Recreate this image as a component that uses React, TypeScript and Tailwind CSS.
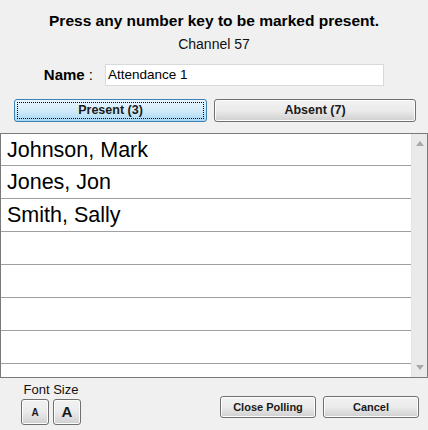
import React from 'react'

const names = ['Johnson, Mark', 'Jones, Jon', 'Smith, Sally', '', '', '', '', '']

const grayBtn =
  'rounded-[3px] border border-[#707070] bg-gradient-to-b from-[#f2f2f2] via-[#ebebeb] to-[#cfcfcf] shadow-[inset_0_0_0_1px_#fcfcfc] text-[#1a1a1a] font-bold'

export default function App() {
  return (
    <div
      className="w-[428px] h-[430px] bg-[#f0f0f0] flex flex-col overflow-hidden text-black"
      style={{ fontFamily: '"Liberation Sans", Arial, sans-serif' }}
    >
      <div className="mt-[12px] text-center text-[15.5px] font-bold leading-[18px]">
        Press any number key to be marked present.
      </div>
      <div className="mt-[6px] text-center text-[14px] leading-[16px] text-[#111]">Channel 57</div>

      {/* name row */}
      <div className="mt-[12px] flex items-center h-[22px]">
        <div className="w-[94px] pr-[1px] text-right text-[15px] font-bold">
          Name <span className="font-normal">:</span>
        </div>
        <div className="ml-[11px] w-[279px] h-[22px] bg-white border border-[#d9d9d9] flex items-center px-[2px] text-[13.5px]">
          Attendance 1
        </div>
      </div>

      {/* tabs */}
      <div className="mt-[13px] flex h-[23px] pl-[14px] gap-[7px]">
        <button className="w-[193px] h-full rounded-[3px] border border-[#3c7fb1] bg-gradient-to-b from-[#eaf6fd] via-[#d2ebf9] to-[#a7d9f5] p-[2px] text-[12.5px] font-bold text-[#1a1a1a]">
          <div className="w-full h-full border border-dotted border-black flex items-center justify-center">
            Present (3)
          </div>
        </button>
        <button className={`${grayBtn} w-[202px] h-full text-[12.5px] flex items-center justify-center`}>
          Absent (7)
        </button>
      </div>

      {/* list */}
      <div className="mt-[11px] h-[245px] w-[428px] border border-[#7a7a7a] bg-white flex">
        <div className="flex-1 flex flex-col overflow-hidden">
          {names.map((n, i) => (
            <div
              key={i}
              className={`shrink-0 border-b border-[#a0a0a0] pl-[6px] text-[21.5px] leading-[28px] ${
                i === 0 ? 'h-[32px] pt-[2px]' : 'h-[33px] pt-[2px]'
              }`}
            >
              {n}
            </div>
          ))}
        </div>
        <div className="w-[16px] bg-[#eaeaea] border-l border-[#e4e4e4] flex flex-col items-center justify-between py-[7px]">
          <svg width="8" height="5" viewBox="0 0 8 5">
            <path d="M0 5 L4 0 L8 5 Z" fill="#a8a8a8" />
          </svg>
          <svg width="8" height="5" viewBox="0 0 8 5">
            <path d="M0 0 L4 5 L8 0 Z" fill="#a8a8a8" />
          </svg>
        </div>
      </div>

      {/* bottom */}
      <div className="flex">
        <div className="ml-[21px] flex flex-col items-center">
          <div className="mt-[5px] text-[13px] leading-[14px] text-[#111]">Font Size</div>
          <div className="mt-[2px] flex gap-[4px]">
            <button className={`${grayBtn} w-[28px] h-[26px] text-[10px] flex items-center justify-center`}>A</button>
            <button className={`${grayBtn} w-[28px] h-[26px] text-[15px] flex items-center justify-center`}>A</button>
          </div>
        </div>
        <div className="ml-auto mr-[9px] mt-[18px] flex gap-[7px]">
          <button className={`${grayBtn} w-[96px] h-[22px] text-[11px] flex items-center justify-center`}>
            Close Polling
          </button>
          <button className={`${grayBtn} w-[96px] h-[22px] text-[11px] flex items-center justify-center`}>
            Cancel
          </button>
        </div>
      </div>
    </div>
  )
}
